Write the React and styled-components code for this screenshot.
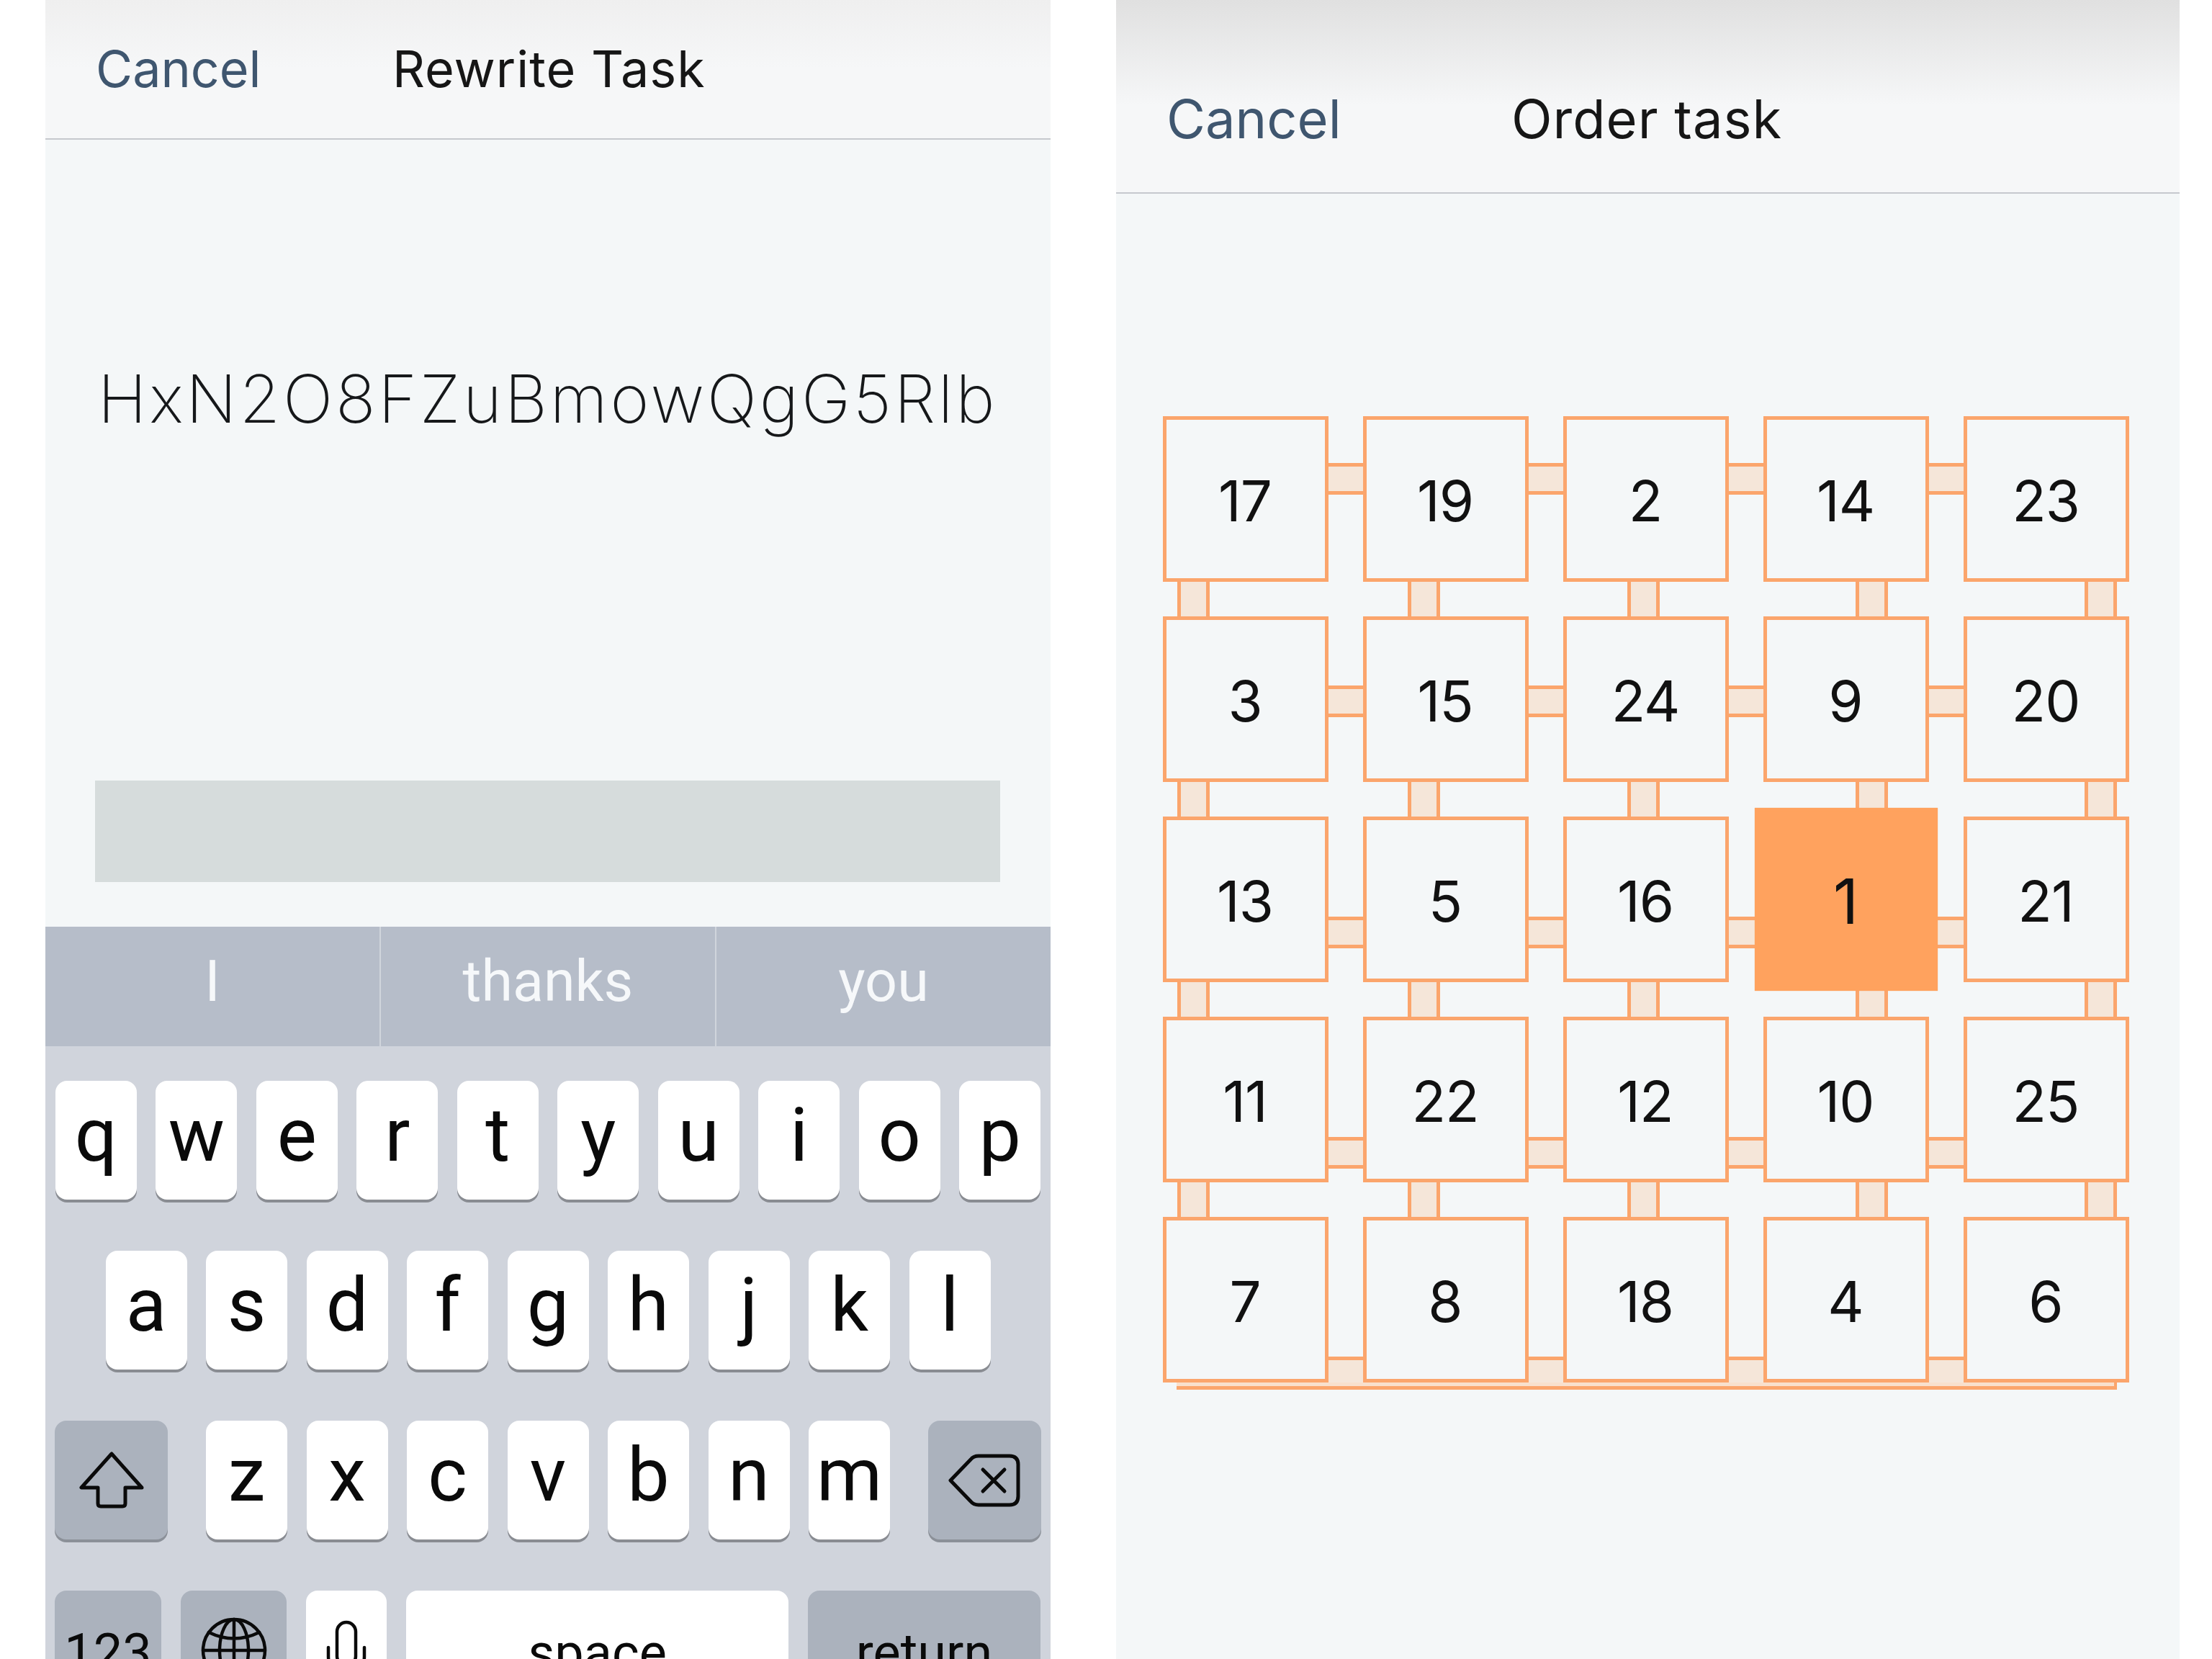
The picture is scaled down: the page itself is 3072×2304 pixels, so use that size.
import React from "react";
import styled, { createGlobalStyle } from "styled-components";

const Global = createGlobalStyle`
  html, body { margin: 0; padding: 0; background: #fff; }
  #root { width: 3072px; height: 2304px; overflow: hidden; }
`;

const Page = styled.div`
  width: 3072px; height: 2304px; overflow: hidden; display: flex; gap: 91px;
  padding-left: 63px; box-sizing: border-box; background: #fff;
  font-family: Inter, "Liberation Sans", sans-serif;
`;
const Phone = styled.section`
  width: ${p => p.$width}px; height: 2304px; flex: none; display: flex; flex-direction: column;
  background: #f4f7f8; overflow: hidden;
`;
const Header = styled.header`
  height: ${p => p.$height}px; flex: none; box-sizing: border-box; display: flex; align-items: center;
  padding: ${p => p.$pad}; border-bottom: 2px solid #c6c9ce;
  background: linear-gradient(180deg, ${p => p.$from} 0%, #f6f7f8 ${p => p.$stop}%, #f6f7f8 100%);
`;
const CancelLabel = styled.span`
  font-size: ${p => p.$size}px; font-weight: 400; color: #3f566f;
  width: ${p => p.$w}px; flex: none; line-height: 1;
`;
const Title = styled.span`
  font-size: ${p => p.$size}px; font-weight: 400; color: #161616; letter-spacing: 1px; line-height: 1;
`;
const Content = styled.main`
  height: 1093px; flex: none; box-sizing: border-box; display: flex; flex-direction: column; padding: 0 70px 62px 69px;
`;
const Prompt = styled.div`
  flex: 1; box-sizing: border-box; padding-top: 305px; text-align: center;
  font-size: 92px; line-height: 110px; font-weight: 200; color: #16181a; letter-spacing: 3.7px; white-space: nowrap;
`;
const AnswerField = styled.div`
  height: 141px; background: #d6dcdc; flex: none;
`;
const Suggestions = styled.div`
  display: flex; height: 166px; flex: none; background: #b6bdc9;
`;
const Suggestion = styled.div`
  flex: 1; display: flex; align-items: center; justify-content: center; padding-bottom: 14px; box-sizing: border-box;
  font-family: Roboto, sans-serif; font-size: 79px; font-weight: 400; color: #f6f8fa;
  & + & { border-left: 2px solid #d0d5dc; }
`;
const Keyboard = styled.div`
  flex: 1; background: #d0d4dc; padding: 48px 13px 0; display: flex; flex-direction: column; gap: 71px;
`;
const KeyRow = styled.div`
  display: flex; height: 165px; flex: none; gap: ${p => p.$gap || 26.5}px;
  justify-content: ${p => p.$justify || "center"};
`;
const KeyGroup = styled.div`
  display: flex; gap: 26.5px;
`;
const Key = styled.div`
  width: ${p => p.$w || 113}px; height: 165px; flex: none; box-sizing: border-box; border-radius: 16px;
  display: flex; align-items: center; justify-content: center;
  padding: ${p => p.$pt ?? 0}px 0 ${p => p.$pb ?? 14}px;
  background: ${p => (p.$dark ? "#abb2bd" : "#fff")};
  box-shadow: 0 4px 0 ${p => (p.$dark ? "#8b9098" : "#898c92")};
  font-family: Roboto, sans-serif; font-size: ${p => p.$size || 104}px; font-weight: 400; color: #0a0a0a; line-height: 1;
`;
const Board = styled.div`
  position: relative; margin: 309px 0 0 65px; width: 1342px;
  display: grid; grid-template-columns: repeat(5, 230px); grid-auto-rows: 230px; gap: 48px;
`;
const Cell = styled.div`
  position: relative;
`;
const Tile = styled.div`
  position: relative; z-index: ${p => (p.$active ? 2 : 1)}; width: 230px; height: 230px; box-sizing: border-box;
  display: flex; align-items: center; justify-content: center; padding: 6px 2px 0 0;
  border: 5px solid ${p => (p.$active ? "#ffa25e" : "#fba56c")};
  background: ${p => (p.$active ? "#ffa25e" : "#f4f7f8")};
  transform: ${p => (p.$active ? "scale(1.105)" : "none")};
  font-size: 78px; font-weight: 400; color: #111; line-height: 1; letter-spacing: -1px;
`;
const HLink = styled.div`
  position: absolute; z-index: 0; left: 226px; top: ${p => p.$top}px; width: 56px; height: ${p => p.$h}px;
  box-sizing: border-box; background: #f5e6d9; border: solid #fba56c; border-width: 5px 0;
`;
const VLink = styled.div`
  position: absolute; z-index: 0; top: 226px; left: ${p => p.$left}px; width: 45px; height: ${p => p.$h}px;
  box-sizing: border-box; background: #f5e6d9; border: solid #fba56c; border-width: 0 5px;
`;
const Rail = styled.div`
  position: absolute; z-index: 0; left: 19px; right: 21px; top: 100%; height: 10px; box-sizing: border-box;
  background: #f8e0cd; border-bottom: 5px solid #fba56c;
`;
const Icon = styled.svg`
  display: block; flex: none; fill: none; stroke: #0a0a0a; stroke-linejoin: round; stroke-linecap: round;
  margin-top: ${p => p.$mt || 0}px;
`;

const Shift = () => (
  <Icon width="90" height="80" viewBox="0 0 90 80" strokeWidth="5">
    <path d="M45 3 L3 50 H26 V72 Q26 76 30 76 H60 Q64 76 64 72 V50 H87 Z" />
  </Icon>
);
const Backspace = () => (
  <Icon width="104" height="78" viewBox="0 0 104 78" strokeWidth="5">
    <path d="M4 39 L32 10 Q36 5 43 5 H86 Q98 5 98 17 V61 Q98 73 86 73 H43 Q36 73 32 68 Z" />
    <path d="M49 24 L79 54 M79 24 L49 54" />
  </Icon>
);
const Globe = () => (
  <Icon width="92" height="92" viewBox="0 0 92 92" strokeWidth="4.5">
    <circle cx="46" cy="46" r="43" />
    <ellipse cx="46" cy="46" rx="20" ry="43" />
    <path d="M46 3 V89 M3 46 H89 M11 21 Q46 38 81 21 M11 71 Q46 54 81 71" />
  </Icon>
);
const Mic = () => (
  <Icon width="56" height="92" viewBox="0 0 56 92" strokeWidth="4.5" $mt={8}>
    <rect x="15" y="3" width="26" height="60" rx="13" />
    <path d="M3 38 V50 Q3 75 28 75 Q53 75 53 50 V38 M28 75 V90" />
  </Icon>
);

const rows = [
  [17, 19, 2, 14, 23],
  [3, 15, 24, 9, 20],
  [13, 5, 16, 1, 21],
  [11, 22, 12, 10, 25],
  [7, 8, 18, 4, 6],
];
const hTop = [65, 96, 139, 167, 194];
const hHeight = [44, 44, 44, 44, 46];
const vLeft = [20, 62, 89, 128, 168];

const Row = ({ keys }) => (
  <KeyRow>{keys.split("").map(k => <Key key={k}>{k}</Key>)}</KeyRow>
);

export default function App() {
  return (
    <Page>
      <Global />
      <Phone $width={1396}>
        <Header $height={194} $from="#efefef" $stop={50} $pad="0 0 0 70px">
          <CancelLabel $size={70} $w={412}>Cancel</CancelLabel>
          <Title $size={70}>Rewrite Task</Title>
        </Header>
        <Content>
          <Prompt>HxN2O8FZuBmowQgG5Rlb</Prompt>
          <AnswerField />
        </Content>
        <Suggestions>
          <Suggestion>I</Suggestion>
          <Suggestion>thanks</Suggestion>
          <Suggestion>you</Suggestion>
        </Suggestions>
        <Keyboard>
          <Row keys="qwertyuiop" />
          <Row keys="asdfghjkl" />
          <KeyRow $justify="space-between">
            <Key $w={157} $dark $pb={0}><Shift /></Key>
            <KeyGroup>
              {"zxcvbnm".split("").map(k => <Key key={k}>{k}</Key>)}
            </KeyGroup>
            <Key $w={157} $dark $pb={0}><Backspace /></Key>
          </KeyRow>
          <KeyRow $gap={27} $justify="flex-start">
            <Key $w={148} $dark $size={72} $pb={0} $pt={8}>123</Key>
            <Key $w={147} $dark $pb={0}><Globe /></Key>
            <Key $w={112} $pb={0}><Mic /></Key>
            <Key $w={531} $size={72} $pb={0} $pt={8}>space</Key>
            <Key $w={323} $dark $size={72} $pb={0} $pt={8}>return</Key>
          </KeyRow>
        </Keyboard>
      </Phone>
      <Phone $width={1477}>
        <Header $height={269} $from="#e0e0e0" $stop={55} $pad="62px 0 0 70px">
          <CancelLabel $size={74} $w={479}>Cancel</CancelLabel>
          <Title $size={74}>Order task</Title>
        </Header>
        <Board>
          {rows.map((row, r) =>
            row.map((n, c) => (
              <Cell key={n}>
                <Tile $active={n === 1}>{n}</Tile>
                {c < 4 && <HLink $top={hTop[r]} $h={hHeight[r]} />}
                <VLink $left={vLeft[c]} $h={r < 4 ? 56 : 14} />
              </Cell>
            ))
          )}
          <Rail />
        </Board>
      </Phone>
    </Page>
  );
}
